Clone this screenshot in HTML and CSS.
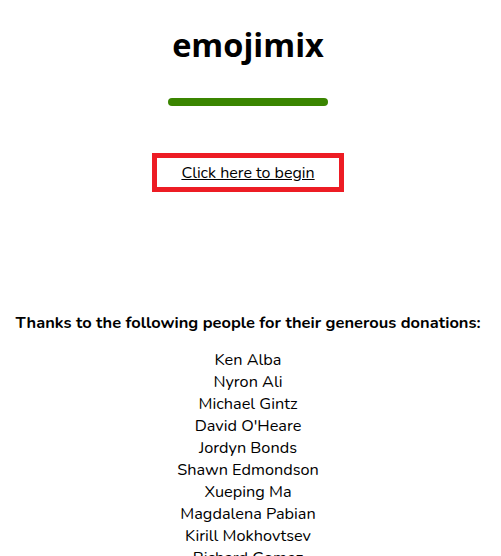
FILE: index.html
```html
<!DOCTYPE html>
<html>
<head>
<meta charset="utf-8">
<link rel="stylesheet" href="styles.css">
</head>
<body>
<main class="page">
  <h1 class="title">emojimix</h1>
  <div class="bar"></div>
  <div class="start-box"><a class="start-link" href="#">Click here to begin</a></div>
  <h2 class="thanks">Thanks to the following people for their generous donations:</h2>
  <ul class="donors">
    <li>Ken Alba</li>
    <li>Nyron Ali</li>
    <li>Michael Gintz</li>
    <li>David O'Heare</li>
    <li>Jordyn Bonds</li>
    <li>Shawn Edmondson</li>
    <li>Xueping Ma</li>
    <li>Magdalena Pabian</li>
    <li>Kirill Mokhovtsev</li>
    <li>Richard Gomez</li>
  </ul>
</main>
</body>
</html>
```
FILE: styles.css
```css
html, body {
  margin: 0;
  padding: 0;
  background: #fff;
}
body {
  font-family: "Nunito", "Lato", "Noto Sans", sans-serif;
  color: #000;
  overflow: hidden;
}
.page {
  width: 496px;
  display: flex;
  flex-direction: column;
  align-items: center;
  padding-top: 23px;
}
.title {
  margin: 0;
  font-family: "Open Sans", "Noto Sans", sans-serif;
  font-weight: 700;
  font-size: 32.5px;
  line-height: 44px;
  height: 44px;
}
.bar {
  margin-top: 31px;
  width: 160px;
  height: 8px;
  border-radius: 4px;
  background: #3a8500;
}
.start-box {
  margin-top: 47px;
  width: 182px;
  height: 29px;
  border: 5px solid #ed1c24;
  display: flex;
  align-items: center;
  justify-content: center;
}
.start-link {
  color: #000;
  font-size: 16px;
  line-height: 22px;
  text-decoration: underline;
}
.thanks {
  margin: 120px 0 0;
  font-size: 16.45px;
  font-weight: 700;
  line-height: 22px;
  white-space: nowrap;
}
.donors {
  list-style: none;
  margin: 15px 0 0;
  padding: 0;
  text-align: center;
  font-size: 16.3px;
  line-height: 22px;
}
```
